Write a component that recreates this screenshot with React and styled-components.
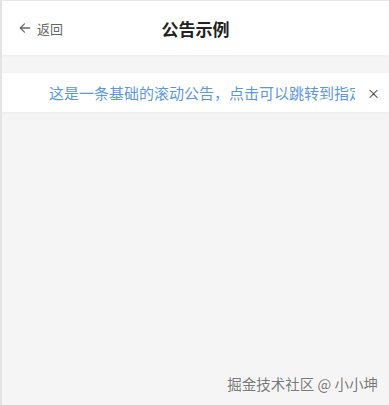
import React from "react";
import styled, { createGlobalStyle } from "styled-components";

const Global = createGlobalStyle`
  html, body { margin: 0; padding: 0; background: #f5f5f5; }
  body { font-family: "Noto Sans CJK SC", "Noto Sans", sans-serif; }
`;

const Page = styled.div`
  height: 405px;
  box-sizing: border-box;
  border-left: 2px solid #e4e4e4;
  border-top: 1px solid #e8e8e8;
  background: #f5f5f5;
  display: flex;
  flex-direction: column;
  overflow: hidden;
`;

const NavBar = styled.div`
  height: 54px;
  background: #fff;
  display: grid;
  grid-template-columns: 1fr auto 1fr;
  align-items: center;
  padding: 0 16px;
  box-shadow: 0 1px 3px rgba(0, 0, 0, 0.04);
`;

const Back = styled.div`
  display: flex;
  align-items: center;
  gap: 5px;
  color: #666;
  font-size: 13px;
`;

const Title = styled.div`
  font-size: 17px;
  font-weight: 700;
  color: #222;
`;

const Notice = styled.div`
  margin-top: 18px;
  height: 39px;
  background: #fff;
  display: flex;
  align-items: center;
  padding: 0 12px 0 47px;
  box-shadow: 0 1px 3px rgba(0, 0, 0, 0.05);
`;

const Track = styled.div`
  flex: 1;
  overflow: hidden;
  white-space: nowrap;
  color: #5c97e0;
  font-size: 15px;
`;

const Close = styled.div`
  width: 10px;
  margin-left: 12px;
  text-align: center;
  color: #333;
  font-size: 13px;
  line-height: 1;
`;

const Spacer = styled.div`
  flex: 1;
`;

const Watermark = styled.div`
  align-self: flex-end;
  margin: 0 11px 11px 0;
  font-size: 14.5px;
  color: #777;
  text-shadow: 0 0 2px #fff, 0 0 1px #fff;
`;

export default function App() {
  return (
    <>
      <Global />
      <Page>
        <NavBar>
          <Back>
            <svg width="14" height="14" viewBox="0 0 24 24" fill="none" stroke="#666" strokeWidth="2.2" strokeLinecap="round" strokeLinejoin="round">
              <path d="M20 12H4" />
              <path d="M11 19l-7-7 7-7" />
            </svg>
            返回
          </Back>
          <Title>公告示例</Title>
          <div />
        </NavBar>
        <Notice>
          <Track>这是一条基础的滚动公告，点击可以跳转到指定页面</Track>
          <Close>×</Close>
        </Notice>
        <Spacer />
        <Watermark>掘金技术社区 @ 小小坤</Watermark>
      </Page>
    </>
  );
}
